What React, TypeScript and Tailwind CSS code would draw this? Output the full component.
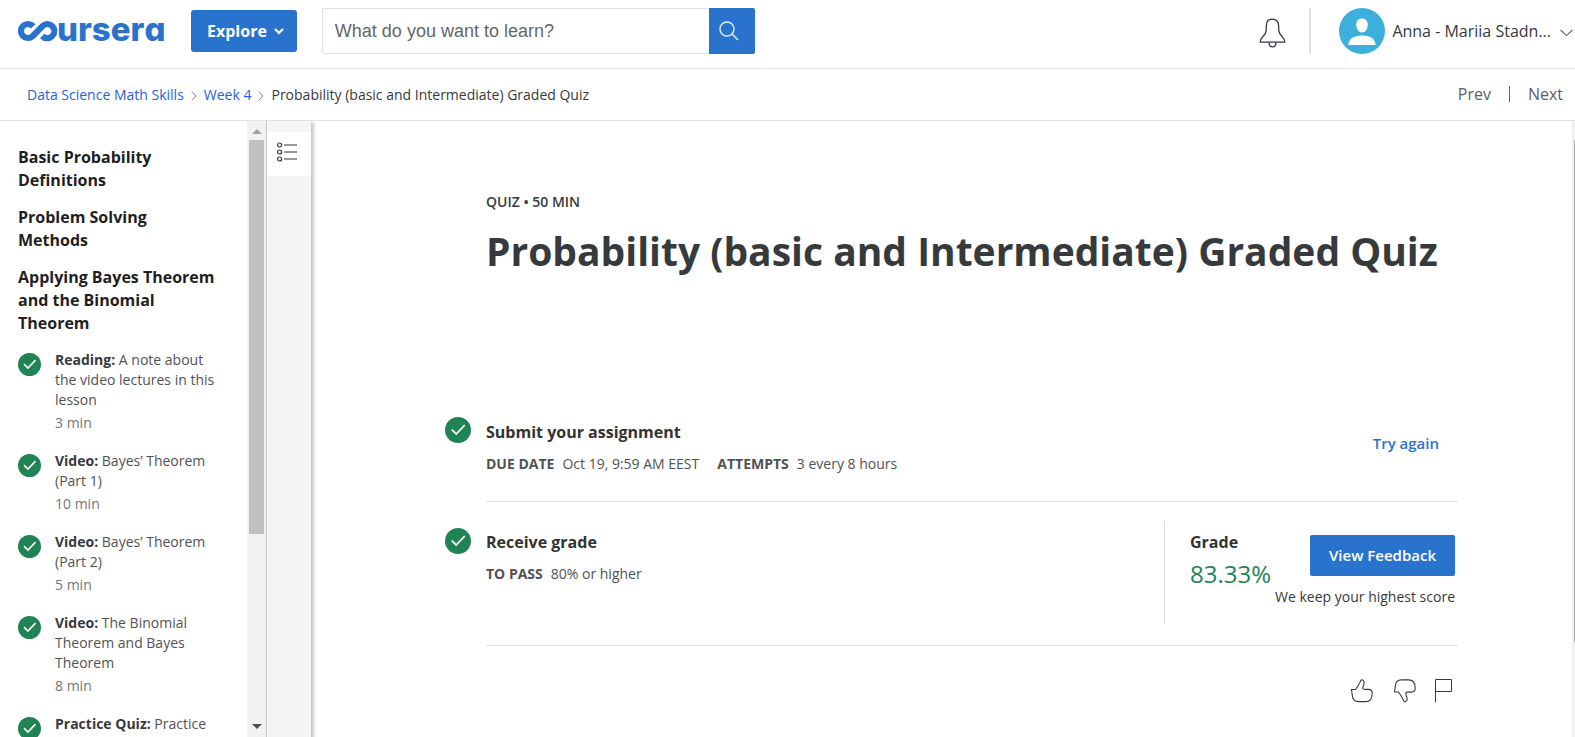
import React from 'react';

type LessonItem = { kind: string; title: string; duration: string };

const modules = [
  'Basic Probability Definitions',
  'Problem Solving Methods',
  'Applying Bayes Theorem and the Binomial Theorem',
];

const items: LessonItem[] = [
  { kind: 'Reading', title: 'A note about the video lectures in this lesson', duration: '3 min' },
  { kind: 'Video', title: 'Bayes’ Theorem (Part 1)', duration: '10 min' },
  { kind: 'Video', title: 'Bayes’ Theorem (Part 2)', duration: '5 min' },
  { kind: 'Video', title: 'The Binomial Theorem and Bayes Theorem', duration: '8 min' },
  { kind: 'Practice Quiz', title: 'Practice', duration: '' },
];

function Logo() {
  return (
    <svg width="152" height="46" viewBox="0 -9 152 46" role="img" aria-label="coursera" className="block shrink-0">
      <path
        d="M16.2 9.4A7 7 0 1 0 15.6 19.2L25.6 9A7 7 0 1 1 25.2 19"
        fill="none"
        stroke="#2a73cc"
        strokeWidth="6.2"
      />
      <text x="40" y="23.5" fontSize="33" fill="#2a73cc" className="font-['Inter',sans-serif] font-extrabold">
        urserɑ
      </text>
    </svg>
  );
}

function CheckCircle({ className }: { className: string }) {
  return (
    <svg viewBox="0 0 26 26" className={className} role="img" aria-label="Completed">
      <circle cx="13" cy="13" r="13" fill="#208354" />
      <path d="M6.8 12.6L11.2 17L19.8 8" fill="none" stroke="#fff" strokeWidth="1.8" />
    </svg>
  );
}

function Crumb() {
  return (
    <svg width="6" height="10" viewBox="0 0 6 10" className="mx-[7px] mt-0.5" aria-hidden="true">
      <path d="M0.8 0.6L5 5L0.8 9.4" fill="none" stroke="#888" strokeWidth="1" />
    </svg>
  );
}

const thumb = 'M0.5 10.5H4.5C6 8.5 8 5.5 9.3 2.6C9.9 1 10.7 0.5 11.6 0.9C13 1.5 13.4 3 13 4.6C12.6 6.6 11.6 8 11.8 9.4C12 10.2 12.6 10.4 13.6 10.4H17.6C20 10.4 21.2 12 21.2 14.4C21.2 19.6 19.4 22.6 14.6 22.6H7.4C3.2 22.6 1.7 20.6 1.4 17Z';

export default function App() {
  return (
    <div className="flex h-screen flex-col overflow-hidden bg-white font-['Open_Sans',sans-serif] text-[#1f1f1f]">
      <header className="flex shrink-0 items-center border-b border-[#e1e1e1] pt-2 pb-[14px] pl-[17px]">
        <a href="#home" className="mr-[22px] block">
          <Logo />
        </a>
        <button type="button" className="mr-[25px] flex h-[42px] items-center gap-[7px] rounded-[3px] bg-[#2a73cc] pr-[13px] pl-4 text-base font-bold text-white">
          Explore
          <svg width="10" height="7" viewBox="0 0 10 7" aria-hidden="true">
            <path d="M1 1L5 5L9 1" fill="none" stroke="#fff" strokeWidth="2.2" />
          </svg>
        </button>
        <form className="flex h-[46px] w-[433px]" onSubmit={(e) => e.preventDefault()}>
          <input
            type="text"
            aria-label="Search"
            placeholder="What do you want to learn?"
            className="min-w-0 flex-1 rounded-l-[3px] border border-r-0 border-[#e1e1e1] px-3 font-['Liberation_Sans',sans-serif] text-lg outline-none placeholder:text-[#666]"
          />
          <button type="submit" aria-label="Submit search" className="flex w-[46px] items-center justify-center rounded-r-[2px] bg-[#2a73cc] pr-[5px]">
            <svg width="20" height="20" viewBox="0 0 20 20" fill="none" stroke="#e3ecf8" strokeWidth="1.4" aria-hidden="true">
              <circle cx="8" cy="8" r="7" />
              <path d="M13 13L19 19" />
            </svg>
          </button>
        </form>
        <div className="ml-auto flex items-center">
          <button type="button" aria-label="Notifications" className="mr-[23px] pt-1">
            <svg width="27" height="30" viewBox="0 0 27 30" fill="none" stroke="#333a45" strokeWidth="1.3" className="block" aria-hidden="true">
              <path d="M13.5 1.2C9.6 1.2 7.4 3.8 7.4 7.4C7.4 14 6.8 16 3.6 19C1.9 20.6 1.2 21.8 1.2 24.2H25.8C25.8 21.8 25.1 20.6 23.4 19C20.2 16 19.6 14 19.6 7.4C19.6 3.8 17.4 1.2 13.5 1.2Z" />
              <path d="M10 24.2C10 27 11.4 28.8 13.5 28.8S17 27 17 24.2" />
            </svg>
          </button>
          <div className="mr-[28px] h-[46px] w-0.5 bg-[#e1e1e1]" />
          <button type="button" className="flex items-center pr-0.5 text-base text-[#373a3c]">
            <svg width="46" height="46" viewBox="0 0 46 46" className="mr-[7px]" aria-hidden="true">
              <circle cx="23" cy="23" r="23" fill="#3dafdb" />
              <path d="M23 10.4C26.6 10.4 28.8 12.8 28.8 16.6C28.8 21 26.4 24.6 23 24.6S17.2 21 17.2 16.6C17.2 12.8 19.4 10.4 23 10.4ZM9.4 37C9.8 31 14 27.6 23 27.6S36.2 31 36.6 37Z" fill="#fff" />
            </svg>
            <span>Anna - Mariia Stadn...</span>
            <svg width="13" height="8" viewBox="0 0 13 8" className="mt-1 ml-[9px]" aria-hidden="true">
              <path d="M0.6 1L6.5 6.6L12.4 1" fill="none" stroke="#666" strokeWidth="1.1" />
            </svg>
          </button>
        </div>
      </header>

      <nav aria-label="Breadcrumb" className="flex h-[52px] shrink-0 items-center border-b border-[#e1e1e1] pr-3 pl-[27px] text-sm">
        <a href="#course" className="text-[#2a5fdc]">Data Science Math Skills</a>
        <Crumb />
        <a href="#week4" className="text-[#2a5fdc]">Week 4</a>
        <Crumb />
        <span className="text-[#373a3c]">Probability (basic and Intermediate) Graded Quiz</span>
        <div className="ml-auto flex items-center pb-0.5 text-base text-[#5e5e5e]">
          <a href="#prev">Prev</a>
          <span className="mx-[18px] h-4 w-px bg-[#666]" />
          <a href="#next">Next</a>
        </div>
      </nav>

      <div className="flex min-h-0 flex-1">
        <aside className="w-[247px] shrink-0 overflow-hidden pt-[25px] pr-[30px] pl-[18px]">
          <div className="flex flex-col gap-[14px] text-base leading-[23px] font-bold">
            {modules.map((m) => (
              <h2 key={m}>{m}</h2>
            ))}
          </div>
          <ul className="mt-[15px] flex flex-col gap-[18px] text-sm leading-5">
            {items.map((it) => (
              <li key={it.kind + it.title} className="flex gap-[14px]">
                <CheckCircle className="mt-[3px] h-[23px] w-[23px] shrink-0" />
                <div>
                  <a href="#item" className="block text-[#525252]">
                    <b className="font-bold text-[#373a3c]">{it.kind}:</b> {it.title}
                  </a>
                  <p className="mt-[3px] text-[#757575]">{it.duration}</p>
                </div>
              </li>
            ))}
          </ul>
        </aside>

        <div aria-hidden="true" className="flex w-[19px] shrink-0 flex-col items-center bg-[#f1f1f1]">
          <svg width="10" height="19" viewBox="0 0 10 19" className="shrink-0">
            <path d="M0 13L5 8L10 13Z" fill="#a3a3a3" />
          </svg>
          <div className="w-[15px] flex-[394] bg-[#c1c1c1]" />
          <div className="flex-[184]" />
          <svg width="10" height="19" viewBox="0 0 10 19" className="shrink-0">
            <path d="M0 6L5 11L10 6Z" fill="#505050" />
          </svg>
        </div>

        <div className="z-10 w-[45px] shrink-0 border-l border-[#c8c8c8] bg-[#f5f5f5] pt-[11px] shadow-[2px_2px_3px_1px_rgba(0,0,0,0.22)] [clip-path:inset(0_-8px_0_0)]">
          <button type="button" aria-label="Lesson outline" className="flex h-11 w-full items-center bg-white pb-[5px] pl-[10px]">
            <svg width="20" height="20" viewBox="0 0 20 20" fill="none" stroke="#333" strokeWidth="1.2" aria-hidden="true">
              <circle cx="2.6" cy="3" r="2" />
              <circle cx="2.6" cy="10" r="2" />
              <circle cx="2.6" cy="17" r="2" />
              <path d="M7 3H20M7 10H20M7 17H20" />
            </svg>
          </button>
        </div>

        <main className="min-w-0 flex-1 overflow-hidden pt-[71px] pr-[114px] pl-[134px]">
          <div className="pl-[41px]">
            <p className="text-sm leading-5 font-semibold text-[#373a3c]">QUIZ • 50 MIN</p>
            <h1 className="mt-[15px] text-[39px] leading-[48px] font-bold whitespace-nowrap text-[#373a3c]">
              Probability (basic and Intermediate) Graded Quiz
            </h1>
          </div>

          <section className="mt-[142px] flex gap-[15px]">
            <CheckCircle className="h-[26px] w-[26px] shrink-0" />
            <div className="flex flex-1 items-start border-b border-[#e1e1e1] pt-[3px] pb-[27px]">
              <div className="flex-1">
                <h2 className="text-base leading-6 font-bold text-[#333]">Submit your assignment</h2>
                <p className="mt-[10px] flex text-sm leading-5 text-[#525252]">
                  <b className="mr-2 font-bold">DUE DATE</b>
                  <span className="mr-[18px]">Oct 19, 9:59 AM EEST</span>
                  <b className="mr-2 font-bold">ATTEMPTS</b>
                  <span>3 every 8 hours</span>
                </p>
              </div>
              <button type="button" className="mt-[11px] mr-[19px] text-[15px] leading-6 font-semibold text-[#2a73cc]">Try again</button>
            </div>
          </section>

          <section className="flex gap-[15px]">
            <CheckCircle className="mt-[26px] h-[26px] w-[26px] shrink-0" />
            <div className="flex flex-1 border-b border-[#e1e1e1] pt-[19px] pb-[21px]">
              <div className="flex-1 pt-[9px]">
                <h2 className="text-base leading-6 font-bold text-[#333]">Receive grade</h2>
                <p className="mt-[10px] flex text-sm leading-5 text-[#525252]">
                  <b className="mr-2 font-bold">TO PASS</b>
                  <span>80% or higher</span>
                </p>
              </div>
              <div className="flex h-[103px] border-l border-[#e1e1e1] pr-[3px] pl-[25px]">
                <div className="pt-[9px]">
                  <h2 className="text-base leading-6 font-bold text-[#333]">Grade</h2>
                  <p className="mt-1 text-2xl leading-8 text-[#208354]">83.33%</p>
                </div>
                <div className="ml-1 flex flex-col items-end pt-[14px]">
                  <button type="button" className="h-[41px] rounded-[2px] bg-[#2a73cc] px-[19px] text-[15px] font-semibold text-white">
                    View Feedback
                  </button>
                  <p className="mt-[11px] text-sm leading-5 text-[#373a3c]">We keep your highest score</p>
                </div>
              </div>
            </div>
          </section>

          <div className="mt-[33px] flex justify-end pr-[6px]">
            <button type="button" aria-label="Like" className="mr-[21px]">
              <svg width="22" height="24" viewBox="0 0 22 24" fill="none" stroke="#373a3c" strokeWidth="1.1" className="block" aria-hidden="true">
                <path d={thumb} />
              </svg>
            </button>
            <button type="button" aria-label="Dislike" className="mr-[19px]">
              <svg width="22" height="24" viewBox="0 0 22 24" fill="none" stroke="#373a3c" strokeWidth="1.1" className="block" aria-hidden="true">
                <path d={thumb} transform="translate(0 23.5) scale(1 -1)" />
              </svg>
            </button>
            <button type="button" aria-label="Report">
              <svg width="17" height="24" viewBox="0 0 17 24" fill="none" stroke="#373a3c" strokeWidth="1" className="block" aria-hidden="true">
                <path d="M0.5 23.5V0.5H16.5V12.5H0.5" />
              </svg>
            </button>
          </div>
        </main>

        <div aria-hidden="true" className="flex w-[3px] shrink-0 flex-col items-end bg-[#f1f1f1] pt-[19px]">
          <div className="w-px flex-[502] bg-[#b0b0b0]" />
          <div className="flex-[95]" />
        </div>
      </div>
    </div>
  );
}
